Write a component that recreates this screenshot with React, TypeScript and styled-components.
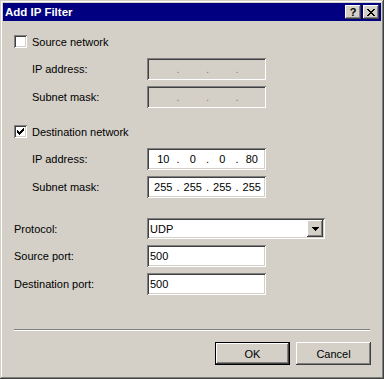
import React from 'react';
import styled, { createGlobalStyle } from 'styled-components';

const GlobalStyle = createGlobalStyle`
  html, body {
    margin: 0;
    padding: 0;
    background: #d4d0c8;
  }

  body {
    font-family: "Liberation Sans", Arial, sans-serif;
    font-size: 11px;
    color: #000;
  }
`;

// classic 3d edges
const raised = `
  box-shadow: inset -1px -1px #404040, inset 1px 1px #fff,
    inset -2px -2px #808080, inset 2px 2px #d4d0c8;
`;

const sunken = `
  box-shadow: inset 1px 1px #808080, inset -1px -1px #fff,
    inset 2px 2px #404040, inset -2px -2px #d4d0c8;
`;

const CheckMark = () => (
  <svg width="7" height="7" viewBox="0 0 7 7" shapeRendering="crispEdges">
    <path d="M6 0h1v3h-1v1h-1v1h-1v1h-1v1h-1v-1h-1v-1h-1v-3h1v1h1v1h1v-1h1v-1h1v-1h1z" fill="#000" />
  </svg>
);

const CloseGlyph = () => (
  <svg width="8" height="7" viewBox="0 0 8 7" shapeRendering="crispEdges">
    <path
      d="M0 0h2v1h1v1h2v-1h1v-1h2v1h-1v1h-1v1h-1v1h1v1h1v1h1v1h-2v-1h-1v-1h-2v1h-1v1h-2v-1h1v-1h1v-1h1v-1h-1v-1h-1v-1h-1z"
      fill="#000"
    />
  </svg>
);

const Arrow = () => (
  <svg width="7" height="4" viewBox="0 0 7 4" shapeRendering="crispEdges">
    <path d="M0 0h7v1h-1v1h-1v1h-1v1h-1v-1h-1v-1h-1v-1h-1z" fill="#000" />
  </svg>
);

const Checkbox = ({ checked }: { checked?: boolean }) => (
  <Box>{checked && <CheckMark />}</Box>
);

const IpAddress = ({ parts, disabled }: { parts?: string[]; disabled?: boolean }) => {
  const values = parts || ['', '', '', ''];
  return (
    <IpBox $disabled={disabled}>
      {values.map((v, i) => (
        <React.Fragment key={i}>
          {i > 0 && <Dot $disabled={disabled}>.</Dot>}
          <Octet>{v}</Octet>
        </React.Fragment>
      ))}
    </IpBox>
  );
};

const App = () => (
  <>
    <GlobalStyle />
    <Window>
      <TitleBar>
        <Title>Add IP Filter</Title>
        <CaptionButton $gap>?</CaptionButton>
        <CaptionButton>
          <CloseGlyph />
        </CaptionButton>
      </TitleBar>

      <Body>
        <CheckRow>
          <Checkbox />
          <CheckLabel>Source network</CheckLabel>
        </CheckRow>
        <Group $top={10}>
          <Row>
            <Label $indent>IP address:</Label>
            <IpAddress disabled />
          </Row>
          <Row>
            <Label $indent>Subnet mask:</Label>
            <IpAddress disabled />
          </Row>
        </Group>

        <CheckRow $top={17}>
          <Checkbox checked />
          <CheckLabel>Destination network</CheckLabel>
        </CheckRow>
        <Group $top={10}>
          <Row>
            <Label $indent>IP address:</Label>
            <IpAddress parts={['10', '0', '0', '80']} />
          </Row>
          <Row>
            <Label $indent>Subnet mask:</Label>
            <IpAddress parts={['255', '255', '255', '255']} />
          </Row>
        </Group>

        <Group $top={20}>
          <Row $height={21}>
            <Label>Protocol:</Label>
            <Combo>
              <ComboText>UDP</ComboText>
              <DropButton>
                <Arrow />
              </DropButton>
            </Combo>
          </Row>
          <Row>
            <Label>Source port:</Label>
            <TextField>500</TextField>
          </Row>
          <Row>
            <Label>Destination port:</Label>
            <TextField>500</TextField>
          </Row>
        </Group>

        <Separator />

        <ButtonRow>
          <PushButton $default>OK</PushButton>
          <PushButton>Cancel</PushButton>
        </ButtonRow>
      </Body>
    </Window>
  </>
);

const Window = styled.div`
  box-sizing: border-box;
  width: 384px;
  height: 379px;
  padding: 3px;
  display: flex;
  flex-direction: column;
  background: #d4d0c8;
  box-shadow: inset -1px -1px #404040, inset 1px 1px #d4d0c8,
    inset -2px -2px #808080, inset 2px 2px #fff;
`;

const TitleBar = styled.div`
  height: 18px;
  display: flex;
  align-items: center;
  padding: 0 2px;
  background: #000080;
`;

const Title = styled.div`
  flex: 1;
  color: #fff;
  font-weight: bold;
  font-size: 11.5px;
`;

const CaptionButton = styled.div<{ $gap?: boolean }>`
  width: 16px;
  height: 14px;
  margin-right: ${(p) => (p.$gap ? '2px' : '0')};
  display: flex;
  align-items: center;
  justify-content: center;
  background: #d4d0c8;
  font-weight: bold;
  font-size: 11px;
  line-height: 14px;
  ${raised}
`;

const Body = styled.div`
  flex: 1;
  display: flex;
  flex-direction: column;
  padding: 14px 10px 0 11px;
`;

const CheckRow = styled.div<{ $top?: number }>`
  height: 13px;
  margin-top: ${(p) => p.$top || 0}px;
  display: flex;
  align-items: center;
`;

const Box = styled.div`
  box-sizing: border-box;
  width: 13px;
  height: 13px;
  padding: 3px;
  background: #fff;
  display: flex;
  ${sunken}
`;

const CheckLabel = styled.span`
  margin-left: 5px;
`;

const Group = styled.div<{ $top: number }>`
  margin-top: ${(p) => p.$top}px;
  display: flex;
  flex-direction: column;
  gap: 6px;
`;

const Row = styled.div<{ $height?: number }>`
  height: ${(p) => p.$height || 22}px;
  display: grid;
  grid-template-columns: 133px auto;
  align-items: center;
`;

const Label = styled.span<{ $indent?: boolean }>`
  padding-left: ${(p) => (p.$indent ? 18 : 0)}px;
`;

const IpBox = styled.div<{ $disabled?: boolean }>`
  box-sizing: border-box;
  width: 119px;
  height: 22px;
  padding: 0 2px 0 4px;
  display: flex;
  align-items: center;
  background: ${(p) => (p.$disabled ? '#d4d0c8' : '#fff')};
  ${sunken}
`;

const Octet = styled.span`
  flex: 1;
  text-align: center;
`;

const Dot = styled.span<{ $disabled?: boolean }>`
  width: 5px;
  text-align: center;
  color: ${(p) => (p.$disabled ? '#808080' : '#000')};
`;

const TextField = styled.div`
  box-sizing: border-box;
  width: 119px;
  height: 22px;
  padding: 0 3px;
  display: flex;
  align-items: center;
  background: #fff;
  ${sunken}
`;

const Combo = styled.div`
  box-sizing: border-box;
  width: 178px;
  height: 21px;
  padding: 2px;
  display: flex;
  align-items: stretch;
  background: #fff;
  ${sunken}
`;

const ComboText = styled.span`
  flex: 1;
  padding-left: 1px;
  display: flex;
  align-items: center;
`;

const DropButton = styled.div`
  width: 16px;
  display: flex;
  align-items: center;
  justify-content: center;
  background: #d4d0c8;
  ${raised}
`;

const Separator = styled.div`
  margin: 34px 1px 0 0;
  border-top: 1px solid #808080;
  border-bottom: 1px solid #fff;
`;

const ButtonRow = styled.div`
  margin-top: 11px;
  display: flex;
  justify-content: flex-end;
  gap: 6px;
`;

const PushButton = styled.div<{ $default?: boolean }>`
  width: 75px;
  height: 23px;
  display: flex;
  align-items: center;
  justify-content: center;
  background: #d4d0c8;
  box-shadow: ${(p) =>
    p.$default
      ? 'inset 0 0 0 1px #000, inset -2px -2px #404040, inset 2px 2px #fff, inset -3px -3px #808080'
      : 'inset -1px -1px #404040, inset 1px 1px #fff, inset -2px -2px #808080, inset 2px 2px #d4d0c8'};
`;

export default App;
